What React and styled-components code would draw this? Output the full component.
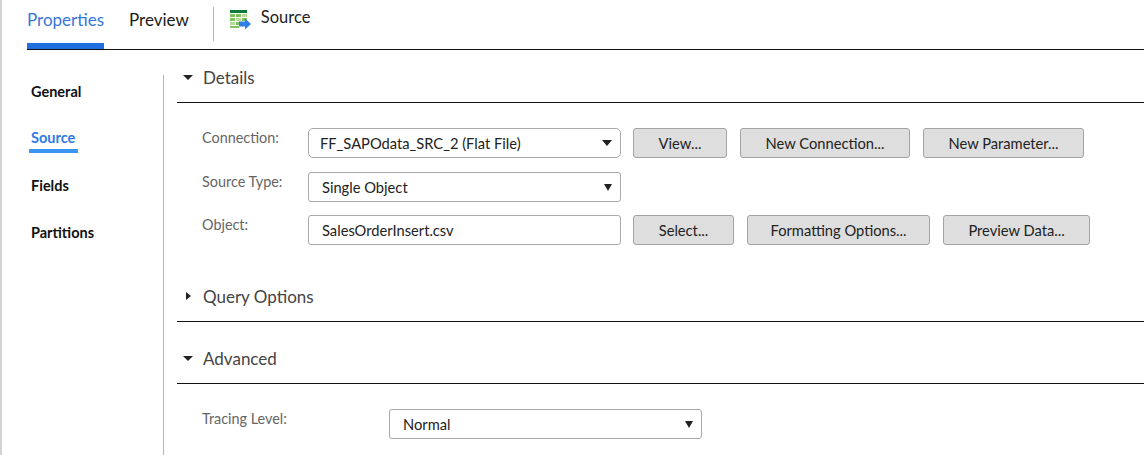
import styled, { createGlobalStyle } from "styled-components";

const GlobalStyle = createGlobalStyle`
  html, body {
    margin: 0;
    padding: 0;
    background: #fff;
  }
  body {
    font-family: "Lato", "Open Sans", sans-serif;
    color: #222;
  }
`;

const Page = styled.div`
  width: 1144px;
  height: 455px;
  overflow: hidden;
  box-sizing: border-box;
  border-left: 2px solid #d4d4d4;
  display: flex;
  flex-direction: column;
`;

const TopBar = styled.div`
  height: 49px;
  flex: none;
  display: flex;
  align-items: flex-start;
  margin-left: 25px;
  border-bottom: 1px solid #111;
  box-sizing: content-box;
`;

const Tab = styled.div`
  height: 43px;
  line-height: 40px;
  font-size: 17px;
  margin-right: ${(p) => p.$gap}px;
  color: ${(p) => (p.$active ? "#3577dc" : "#1a1a1a")};
  border-bottom: 6px solid ${(p) => (p.$active ? "#1f6fe0" : "transparent")};
`;

const TopDivider = styled.div`
  width: 1px;
  height: 34px;
  margin-top: 7px;
  margin-right: 16px;
  background: #b5b5b5;
`;

const ObjectIcon = styled.svg`
  width: 21px;
  height: 20px;
  margin-top: 10px;
  margin-right: 10px;
`;

const ObjectName = styled.div`
  font-size: 16.500px;
  line-height: 34px;
  color: #222;
`;

const Content = styled.div`
  flex: 1;
  display: flex;
  min-height: 0;
`;

const SideNav = styled.div`
  width: 162px;
  height: 380px;
  margin-top: 25px;
  flex: none;
  box-sizing: border-box;
  border-right: 1px solid #b5b5b5;
  padding: 7px 0 0 29px;
  display: flex;
  flex-direction: column;
  gap: 22px;
`;

const NavItem = styled.div`
  align-self: flex-start;
  height: 25px;
  line-height: 20px;
  font-size: 14.500px;
  font-weight: 700;
  color: #111;
  ${(p) =>
    p.$active &&
    `
    box-sizing: border-box;
    height: 24px;
    margin-bottom: 1px;
    margin-left: -2px;
    padding: 0 3px 0 2px;
    line-height: 18px;
    color: #2f7be6;
    border-bottom: 4px solid #3b93f2;
  `}
`;

const Main = styled.div`
  flex: 1;
  margin-left: 13px;
  padding-top: 10px;
  min-width: 0;
`;

const SectionHeader = styled.div`
  height: 34px;
  padding: 0 0 8px 6px;
  box-sizing: content-box;
  display: flex;
  align-items: center;
  gap: 10px;
  border-bottom: 1px solid #111;
  font-size: 17px;
  color: #444;
  margin-top: ${(p) => p.$top || 0}px;
`;

const Caret = styled.span`
  width: 10px;
  display: flex;
  justify-content: center;
  ${(p) =>
    p.$open
      ? `
    &::before {
      content: "";
      border-left: 5px solid transparent;
      border-right: 5px solid transparent;
      border-top: 5px solid #222;
    }`
      : `
    &::before {
      content: "";
      border-top: 4.500px solid transparent;
      border-bottom: 4.500px solid transparent;
      border-left: 5px solid #222;
    }`}
`;

const SectionBody = styled.div`
  padding: 25px 0 0 25px;
  display: flex;
  flex-direction: column;
`;

const FormRow = styled.div`
  display: flex;
  align-items: flex-start;
  margin-bottom: ${(p) => p.$gap || 0}px;
`;

const Label = styled.div`
  width: ${(p) => p.$width || 106}px;
  flex: none;
  font-size: 14.400px;
  line-height: 20px;
  color: #666;
`;

const Field = styled.div`
  width: 313px;
  height: 30px;
  flex: none;
  box-sizing: border-box;
  border: 1px solid #a9a9a9;
  border-radius: ${(p) => p.$radius || 3}px;
  background: #fff;
  display: flex;
  align-items: center;
  justify-content: space-between;
  padding: 0 8px 0 ${(p) => p.$left || 13}px;
  font-size: 14.700px;
  color: #222;
`;

const SelectArrow = styled.span`
  border-left: ${(p) => (p.$flat ? 5 : 4.5)}px solid transparent;
  border-right: ${(p) => (p.$flat ? 5 : 4.5)}px solid transparent;
  border-top: ${(p) => (p.$flat ? 6 : 7)}px solid #222;
`;

const Buttons = styled.div`
  display: flex;
  gap: 13px;
  margin-left: 12px;
`;

const Button = styled.div`
  width: ${(p) => p.$width}px;
  height: 30px;
  box-sizing: border-box;
  border: 1px solid #a3a3a3;
  border-radius: 3px;
  background: #dedede;
  display: flex;
  align-items: center;
  justify-content: center;
  font-size: 14.700px;
  color: #222;
`;

function SheetIcon() {
  return (
    <ObjectIcon viewBox="0 0 21 20">
      <rect x="0" y="0" width="17" height="3" fill="#0f7a3a" />
      <rect x="0" y="4" width="5" height="3" fill="#7fc25c" />
      <rect x="6" y="4" width="5" height="3" fill="#7fc25c" />
      <rect x="12" y="4" width="5" height="3" fill="#b4dc96" />
      <rect x="0" y="8" width="5" height="3" fill="#7fc25c" />
      <rect x="6" y="8" width="5" height="3" fill="#b4dc96" />
      <rect x="12" y="8" width="5" height="3" fill="#7fc25c" />
      <rect x="0" y="12" width="5" height="3" fill="#b4dc96" />
      <rect x="6" y="12" width="4" height="3" fill="#7fc25c" />
      <rect x="0" y="16" width="9" height="2" fill="#7fc25c" />
      <path d="M9 11.500h6V8.500l6 5.500-6 5.500v-3H9z" fill="#2f7fe6" />
    </ObjectIcon>
  );
}

export default function App() {
  return (
    <Page>
      <GlobalStyle />
      <TopBar>
        <Tab $active $gap={25}>Properties</Tab>
        <Tab $gap={24}>Preview</Tab>
        <TopDivider />
        <SheetIcon />
        <ObjectName>Source</ObjectName>
      </TopBar>
      <Content>
        <SideNav>
          <NavItem>General</NavItem>
          <NavItem $active>Source</NavItem>
          <NavItem>Fields</NavItem>
          <NavItem>Partitions</NavItem>
        </SideNav>
        <Main>
          <SectionHeader>
            <Caret $open />
            Details
          </SectionHeader>
          <SectionBody>
            <FormRow $gap={14}>
              <Label>Connection:</Label>
              <Field $radius={5} $left={11}>
                FF_SAPOdata_SRC_2 (Flat File)
                <SelectArrow $flat />
              </Field>
              <Buttons>
                <Button $width={94}>View...</Button>
                <Button $width={170}>New Connection...</Button>
                <Button $width={161}>New Parameter...</Button>
              </Buttons>
            </FormRow>
            <FormRow $gap={13}>
              <Label>Source Type:</Label>
              <Field>
                Single Object
                <SelectArrow />
              </Field>
            </FormRow>
            <FormRow>
              <Label>Object:</Label>
              <Field>SalesOrderInsert.csv</Field>
              <Buttons>
                <Button $width={101}>Select...</Button>
                <Button $width={183}>Formatting Options...</Button>
                <Button $width={147}>Preview Data...</Button>
              </Buttons>
            </FormRow>
          </SectionBody>
          <SectionHeader $top={34}>
            <Caret />
            Query Options
          </SectionHeader>
          <SectionHeader $top={19}>
            <Caret $open />
            Advanced
          </SectionHeader>
          <SectionBody>
            <FormRow>
              <Label $width={187}>Tracing Level:</Label>
              <Field>
                Normal
                <SelectArrow />
              </Field>
            </FormRow>
          </SectionBody>
        </Main>
      </Content>
    </Page>
  );
}
